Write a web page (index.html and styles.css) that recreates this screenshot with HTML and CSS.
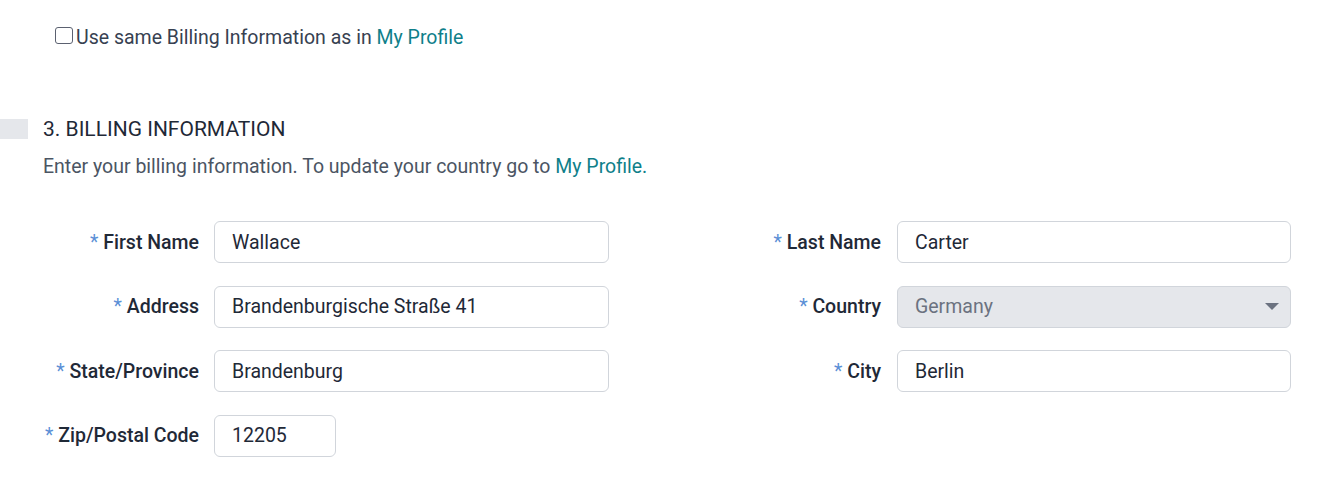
FILE: index.html
```html
<!DOCTYPE html>
<html>
<head>
<meta charset="utf-8">
<link rel="stylesheet" href="styles.css">
</head>
<body>
<div class="page">
  <label class="same-row">
    <span class="checkbox"></span>
    <span>Use same Billing Information as in <a class="link" href="#">My Profile</a></span>
  </label>

  <section class="section">
    <div class="section-head">
      <span class="marker"></span>
      <h2 class="title">3. BILLING INFORMATION</h2>
    </div>
    <p class="desc">Enter your billing information. To update your country go to <a class="link" href="#">My Profile.</a></p>

    <div class="form">
      <div class="field">
        <span class="label"><span class="req">*</span> First Name</span>
        <div class="input">Wallace</div>
      </div>
      <div class="field">
        <span class="label"><span class="req">*</span> Last Name</span>
        <div class="input">Carter</div>
      </div>
      <div class="field">
        <span class="label"><span class="req">*</span> Address</span>
        <div class="input">Brandenburgische Straße 41</div>
      </div>
      <div class="field">
        <span class="label"><span class="req">*</span> Country</span>
        <div class="input select">
          <span>Germany</span>
          <svg class="caret" width="14" height="8" viewBox="0 0 14 8"><path d="M0 0h14L7 7z" fill="#6b7280"/></svg>
        </div>
      </div>
      <div class="field">
        <span class="label"><span class="req">*</span> State/Province</span>
        <div class="input">Brandenburg</div>
      </div>
      <div class="field">
        <span class="label"><span class="req">*</span> City</span>
        <div class="input">Berlin</div>
      </div>
      <div class="field">
        <span class="label"><span class="req">*</span> Zip/Postal Code</span>
        <div class="input zip">12205</div>
      </div>
    </div>
  </section>
</div>
</body>
</html>
```

FILE: styles.css
```css
* { box-sizing: border-box; }
html, body { margin: 0; padding: 0; background: #fff; }
body {
  font-family: Roboto, "Liberation Sans", sans-serif;
  color: #1f2937;
  width: 1321px;
  height: 501px;
  overflow: hidden;
}
.page { padding-top: 27px; }
.link { color: #0f7f8a; text-decoration: none; }

.same-row {
  display: flex;
  align-items: center;
  gap: 3px;
  margin-left: 55px;
  font-size: 19.5px;
  line-height: 22px;
  color: #374151;
}
.checkbox {
  width: 18px;
  height: 17px;
  border: 1.5px solid #5b6170;
  border-radius: 3px;
  background: #fff;
  margin-top: -6px;
}

.section { margin-top: 68px; }
.section-head { display: flex; align-items: center; gap: 15px; }
.marker { width: 28px; height: 20px; background: #e5e7eb; }
.title {
  margin: 0;
  font-size: 21px;
  font-weight: 400;
  line-height: 24px;
  color: #1f2937;
}
.desc {
  margin: 13px 0 0 43px;
  font-size: 19.5px;
  line-height: 26px;
  color: #4b5563;
}

.form {
  margin: 41px 0 0 43px;
  width: 1248px;
  display: grid;
  grid-template-columns: 566px 566px;
  column-gap: 116px;
  row-gap: 22.67px;
}
.field { display: flex; align-items: center; gap: 15px; }
.field:nth-child(even) { gap: 16px; }
.label {
  width: 156px;
  flex: none;
  text-align: right;
  font-size: 19.5px;
  font-weight: 500;
  color: #1f2937;
  white-space: nowrap;
}
.req { color: #5b8fd6; font-weight: 400; }
.input {
  flex: 1;
  height: 42px;
  border: 1px solid #d1d5db;
  border-radius: 6px;
  padding: 0 17px;
  display: flex;
  align-items: center;
  font-size: 19.5px;
  color: #1f2937;
  background: #fff;
}
.select {
  background: #e5e7eb;
  color: #6b7280;
  justify-content: space-between;
  padding-right: 11px;
}
.zip { flex: none; width: 122px; }
```
